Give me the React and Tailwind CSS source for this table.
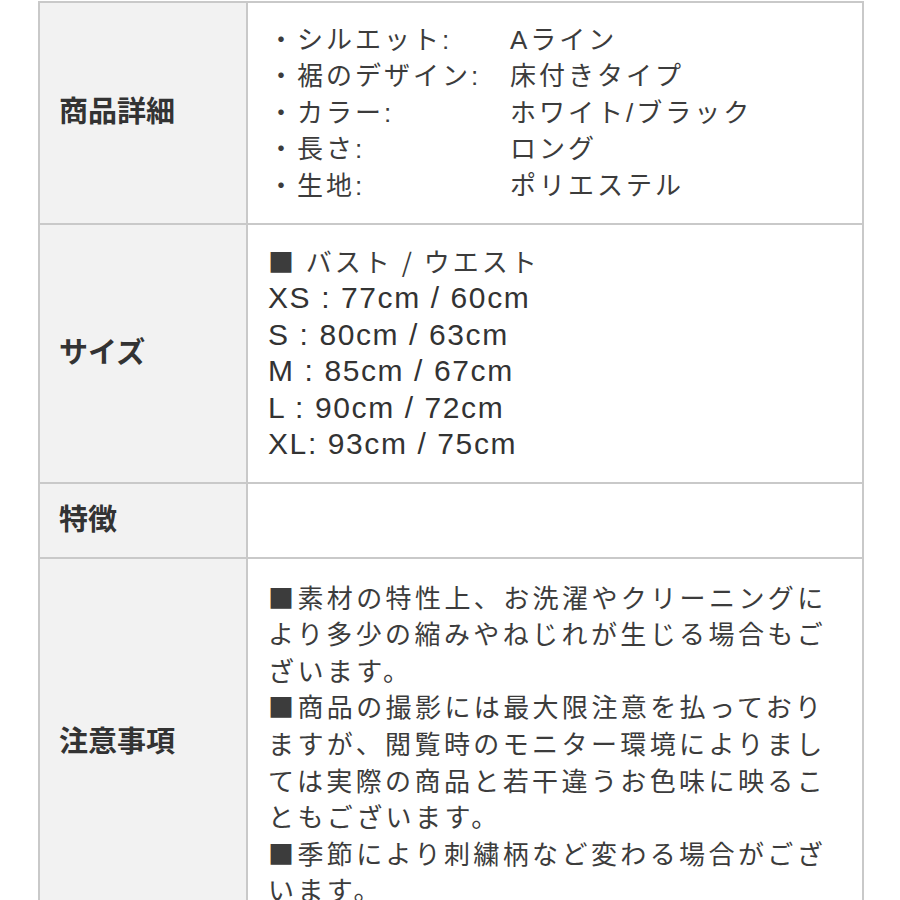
import React from "react";

// Product spec table content
const details = [
  { label: "シルエット:", value: "Aライン" },
  { label: "裾のデザイン:", value: "床付きタイプ" },
  { label: "カラー:", value: "ホワイト/ブラック" },
  { label: "長さ:", value: "ロング" },
  { label: "生地:", value: "ポリエステル" },
];

const sizes = [
  "XS : 77cm / 60cm",
  "S : 80cm / 63cm",
  "M : 85cm / 67cm",
  "L : 90cm / 72cm",
  "XL: 93cm / 75cm",
];

const notes = [
  "■素材の特性上、お洗濯やクリーニングにより多少の縮みやねじれが生じる場合もございます。",
  "■商品の撮影には最大限注意を払っておりますが、閲覧時のモニター環境によりましては実際の商品と若干違うお色味に映ることもございます。",
  "■季節により刺繍柄など変わる場合がございます。",
];

const cjk = { fontFamily: '"Noto Sans CJK JP", sans-serif' };

function Row({ label, children, last }) {
  return (
    <div className={`flex ${last ? "" : "border-b-2 border-[#c9c9c9]"}`}>
      <div className="w-[208px] shrink-0 bg-[#f2f2f2] border-r-2 border-[#c9c9c9] flex items-center pl-[19px]">
        <span className="text-[29px] font-bold text-[#333]">{label}</span>
      </div>
      <div className="flex-1 pl-5 pr-[28px] py-[18.5px] text-[26px] tracking-[3px] leading-[36.6px] text-[#3c3c3c]">
        {children}
      </div>
    </div>
  );
}

export default function App() {
  return (
    <div
      className="w-[900px] min-h-[900px] bg-white pl-[38px] pt-[1px] overflow-hidden"
      style={{ fontFamily: '"Liberation Sans", "Noto Sans CJK JP", sans-serif' }}
    >
      <div className="w-[826px] border-2 border-[#c9c9c9]">
        {/* 商品詳細 */}
        <Row label="商品詳細">
          {details.map((d, i) => (
            <div key={i} className="grid grid-cols-[242px_1fr]">
              <span>・{d.label}</span>
              <span>{d.value}</span>
            </div>
          ))}
        </Row>

        {/* サイズ */}
        <Row label="サイズ">
          <div style={cjk}>■ バスト / ウエスト</div>
          {sizes.map((s, i) => (
            <div key={i} className="text-[30px] tracking-[1.6px] text-[#333]">
              {s}
            </div>
          ))}
        </Row>

        {/* 特徴 */}
        <Row label="特徴">
          <div className="h-[36.6px]"></div>
        </Row>

        {/* 注意事項 */}
        <Row label="注意事項" last>
          <div className="pt-[1px] leading-[36.6px] tracking-[3.4px]" style={cjk}>
            {notes.map((n, i) => (
              <p key={i}>{n}</p>
            ))}
          </div>
        </Row>
      </div>
    </div>
  );
}
